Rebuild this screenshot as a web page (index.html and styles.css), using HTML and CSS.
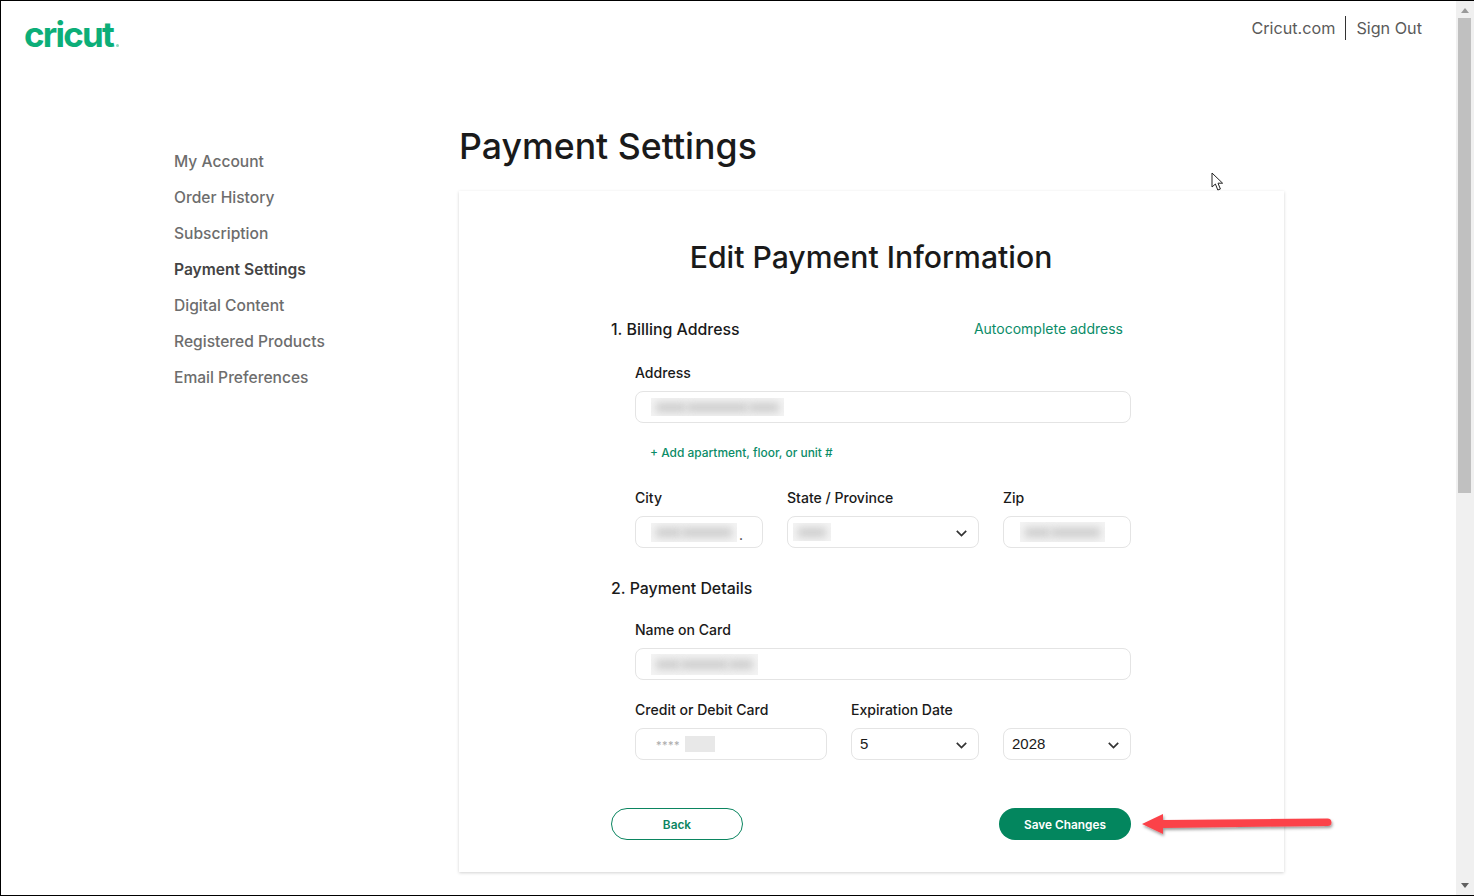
FILE: index.html
```html
<!DOCTYPE html>
<html lang="en">
<head>
<meta charset="utf-8">
<title>Payment Settings</title>
<link rel="stylesheet" href="styles.css">
</head>
<body>
<div class="frame">
  <div class="page">
    <header class="header">
      <a class="logo">cricut<span class="logo-mark"></span></a>
      <nav class="topnav">
        <a class="topnav-link">Cricut.com</a>
        <a class="topnav-link topnav-last">Sign Out</a>
      </nav>
    </header>
    <div class="content">
      <aside class="sidebar">
        <a class="side-link">My Account</a>
        <a class="side-link">Order History</a>
        <a class="side-link">Subscription</a>
        <a class="side-link active">Payment Settings</a>
        <a class="side-link">Digital Content</a>
        <a class="side-link">Registered Products</a>
        <a class="side-link">Email Preferences</a>
      </aside>
      <main class="main">
        <h1 class="title">Payment Settings</h1>
        <section class="card">
          <h2 class="card-title">Edit Payment Information</h2>
          <form class="form">
            <div class="section-head">
              <h3 class="section-title">1. Billing Address</h3>
              <a class="autocomplete">Autocomplete address</a>
            </div>
            <div class="fields first">
              <div class="group">
                <label class="label">Address</label>
                <div class="input"><span class="patch p-address"><i class="smear s1"></i><i class="smear s2"></i><i class="smear s3"></i></span></div>
              </div>
              <a class="add-link">+ Add apartment, floor, or unit #</a>
              <div class="row row-city">
                <div class="group w128">
                  <label class="label">City</label>
                  <div class="input"><span class="patch p-city"><i class="smear s1"></i><i class="smear s2"></i></span><span class="dot">.</span></div>
                </div>
                <div class="group w192">
                  <label class="label">State / Province</label>
                  <div class="input select tight"><span class="patch p-state"><i class="smear s1"></i></span>
                    <svg class="chev" viewBox="0 0 11 7"><path d="M.8.9 5.500 5.600 10.200.9"/></svg></div>
                </div>
                <div class="group w128">
                  <label class="label">Zip</label>
                  <div class="input"><span class="patch p-zip"><i class="smear s1"></i><i class="smear s2"></i></span></div>
                </div>
              </div>
            </div>
            <div class="section-head second">
              <h3 class="section-title">2. Payment Details</h3>
            </div>
            <div class="fields">
              <div class="group">
                <label class="label">Name on Card</label>
                <div class="input"><span class="patch p-name"><i class="smear s1"></i><i class="smear s2"></i><i class="smear s3"></i></span></div>
              </div>
              <div class="row row-card">
                <div class="group w192">
                  <label class="label">Credit or Debit Card</label>
                  <div class="input card-input"><span class="stars">****</span><span class="patch p-card"></span></div>
                </div>
                <div class="group w128">
                  <label class="label">Expiration Date</label>
                  <div class="input select"><span class="value">5</span>
                    <svg class="chev" viewBox="0 0 11 7"><path d="M.8.9 5.500 5.600 10.200.9"/></svg></div>
                </div>
                <div class="group w128">
                  <label class="label label-empty">&nbsp;</label>
                  <div class="input select"><span class="value">2028</span>
                    <svg class="chev" viewBox="0 0 11 7"><path d="M.8.9 5.500 5.600 10.200.9"/></svg></div>
                </div>
              </div>
            </div>
            <div class="actions">
              <button type="button" class="btn btn-back">Back</button>
              <button type="button" class="btn btn-save">Save Changes</button>
            </div>
          </form>
        </section>
      </main>
    </div>
  </div>
  <div class="scrollbar">
    <div class="arrow-up"></div>
    <div class="thumb"></div>
    <div class="arrow-down"></div>
  </div>
  <svg class="cursor" viewBox="0 0 14 20"><path d="M1 1V15L4.4 12 6.8 18 9.4 17 7 11.2H11.6Z"/></svg>
  <svg class="annot-arrow" viewBox="0 0 200 40">
    <defs><filter id="sh" x="-10%" y="-40%" width="120%" height="190%"><feDropShadow dx="1" dy="2" stdDeviation="1.6" flood-color="#000" flood-opacity=".4"/></filter></defs>
    <path filter="url(#sh)" d="M3 22 24 12 24 18 188.500 16.500C191 16.500 192.500 18 192.500 20.500 192.500 23 191 24 188.500 24L24 26 24 32Z"/>
  </svg>
</div>
</body>
</html>
```
FILE: styles.css
```css
* { box-sizing: border-box; }
html, body { margin: 0; padding: 0; height: 100%; overflow: hidden; background: #fff; }
body { font-family: "Inter", "Liberation Sans", sans-serif; color: #1a1a1a; }
.frame { position: relative; display: flex; width: 1474px; height: 896px; border: 1px solid #000; border-right: 0; overflow: hidden; background: #fff; }
.page { flex: 1; min-width: 0; }

.header { display: flex; justify-content: space-between; height: 123px; padding: 0 34px 0 23px; }
.logo { display: flex; align-items: flex-start; height: 48px; margin-top: 9px; font-size: 35px; line-height: 48px; font-weight: 700; letter-spacing: -1.8px; color: #0cae78; }
.logo-mark { width: 3px; height: 3px; margin: 34px 0 0 3px; border-radius: 50%; background: #8fd8bf; }
.topnav { display: flex; align-items: center; height: 24px; margin-top: 15px; font-size: 16.2px; line-height: 24px; color: #5a5a5a; }
.topnav-link { padding-right: 10px; border-right: 1px solid #333; }
.topnav-last { padding: 0 0 0 10px; border-right: 0; }

.content { display: flex; padding-left: 173px; }
.sidebar { display: flex; flex-direction: column; width: 285px; padding-top: 20px; }
.side-link { height: 36px; font-size: 15.6px; line-height: 36px; font-weight: 500; color: #6d6d6d; }
.side-link.active { font-weight: 600; color: #444; }

.main { width: 825px; }
.title { margin: 0; height: 44px; font-size: 35.7px; line-height: 45px; font-weight: 500; color: #1a1a1a; }
.card { margin-top: 23px; height: 681px; padding: 46px 153px 32px 152px; background: #fff; box-shadow: 0 1px 3px rgba(0,0,0,.18); }
.card-title { margin: 0; height: 40px; text-align: center; font-size: 30.2px; line-height: 40px; font-weight: 500; }
.form { margin-top: 40px; }
.section-head { display: flex; justify-content: space-between; align-items: center; height: 24px; padding-right: 8px; }
.section-head.second { margin-top: 28px; }
.section-title { margin: 2px 0 0; font-size: 15.9px; line-height: 24px; font-weight: 500; color: #1a1a1a; }
.autocomplete { font-size: 14px; line-height: 24px; color: #0b8c68; }
.fields { padding-left: 24px; margin-top: 20px; }
.fields.first { margin-top: 22px; }
.group { display: flex; flex-direction: column; }
.label { height: 20px; margin-bottom: 8px; font-size: 14.05px; line-height: 20px; font-weight: 500; color: #1a1a1a; white-space: nowrap; }
.input { display: flex; align-items: center; height: 32px; padding-left: 15px; background: #fff; border: 1px solid #e4e4e4; border-radius: 8px; }
.select { justify-content: space-between; padding: 0 11px 0 8px; }
.tight { padding-left: 5px; }
.add-link { display: block; height: 20px; margin: 20px 0 0 15px; font-size: 11.95px; line-height: 20px; font-weight: 500; color: #0b8c68; }
.row { display: flex; gap: 24px; }
.row-city { margin-top: 25px; }
.row-card { margin-top: 20px; }
.w128 { width: 128px; }
.w192 { width: 192px; }

.patch { display: flex; align-items: center; gap: 1px; padding: 0 5px; overflow: hidden; background: #f4f4f4; }
.smear { flex: 1; height: 9px; background: #c9c9c9; filter: blur(4px); }
.s2 { flex: 2; }
.s3 { flex: 1; }
.p-address { width: 133px; height: 18px; }
.p-city { width: 86px; height: 19px; }
.p-state { width: 38px; height: 18px; }
.p-zip { width: 85px; height: 20px; margin-left: 1px; }
.p-name { width: 107px; height: 21px; }
.p-card { width: 30px; height: 16px; margin-left: 5px; padding: 0; background: #e8e8e8; }
.dot { margin-left: 2px; margin-top: 6px; font-size: 14px; line-height: 14px; color: #333; }
.stars { margin: 2px 0 0 5px; font-size: 11px; letter-spacing: .5px; line-height: 14px; color: #aaa; }
.value { padding-bottom: 2px; font-family: "Liberation Sans", sans-serif; font-size: 15px; color: #1a1a1a; }
.chev { width: 11px; height: 7px; margin-top: 2px; fill: none; stroke: #333; stroke-width: 1.7; }

.actions { display: flex; justify-content: space-between; margin-top: 48px; }
.btn { width: 132px; height: 32px; padding: 2px 0 0; border-radius: 16px; font-family: inherit; font-size: 11.85px; font-weight: 600; }
.btn-back { background: #fff; border: 1px solid #0b8560; color: #0b8560; }
.btn-save { background: #03865e; border: 0; color: #fff; }

.scrollbar { position: relative; flex: none; width: 18px; background: #f0f0f0; }
.thumb { position: absolute; top: 17px; left: 2px; width: 13px; height: 475px; background: #c0c0c0; }
.arrow-up, .arrow-down { position: absolute; left: 5px; width: 0; height: 0; border-left: 4px solid transparent; border-right: 4px solid transparent; }
.arrow-up { top: 7px; border-bottom: 5px solid #9a9a9a; }
.arrow-down { bottom: 7px; border-top: 5px solid #606060; }

.cursor { position: absolute; left: 1210px; top: 171px; width: 14px; height: 20px; fill: #fff; stroke: #222; stroke-width: 1; }
.annot-arrow { position: absolute; left: 1138px; top: 801px; width: 200px; height: 40px; fill: #fb4349; }
```
